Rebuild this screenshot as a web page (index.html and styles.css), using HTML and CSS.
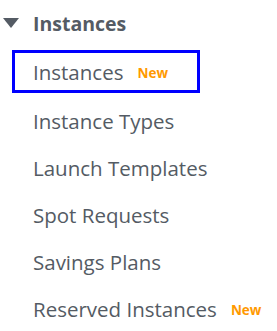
FILE: index.html
```html
<!DOCTYPE html>
<html>
<head>
<meta charset="utf-8">
<link rel="stylesheet" href="styles.css">
</head>
<body>
<nav class="nav">
  <div class="section-head">
    <svg class="caret" width="16" height="10" viewBox="0 0 16 10"><polygon points="0,0 16,0 8,10" fill="#545b64"/></svg>
    <span class="section-title">Instances</span>
  </div>
  <ul class="items">
    <li class="item active"><span>Instances</span><span class="badge">New</span></li>
    <li class="item"><span>Instance Types</span></li>
    <li class="item"><span>Launch Templates</span></li>
    <li class="item"><span>Spot Requests</span></li>
    <li class="item"><span>Savings Plans</span></li>
    <li class="item"><span>Reserved Instances</span><span class="badge">New</span></li>
  </ul>
</nav>
</body>
</html>
```
FILE: styles.css
```css
html, body {
  margin: 0;
  padding: 0;
  background: #ffffff;
}
body {
  font-family: "Open Sans", "Liberation Sans", sans-serif;
  color: #545b64;
}
.nav {
  padding-top: 8px;
}
.section-head {
  display: flex;
  align-items: center;
  height: 30px;
  padding-left: 3px;
  gap: 14px;
}
.caret {
  display: block;
}
.section-title {
  font-size: 19.5px;
  font-weight: 700;
}
.items {
  list-style: none;
  margin: 12px 0 0 0;
  padding: 0;
}
.item {
  display: flex;
  align-items: center;
  height: 47px;
  padding-left: 33px;
  font-size: 20.5px;
  box-sizing: border-box;
}
.item.active {
  margin-left: 12px;
  padding-left: 18px;
  width: 188px;
  height: 43px;
  border: 3px solid #0000ff;
  margin-bottom: 4px;
}
.badge {
  color: #ff9900;
  font-weight: 700;
  font-size: 13.5px;
  margin-left: 14px;
  padding-top: 3px;
}
```
